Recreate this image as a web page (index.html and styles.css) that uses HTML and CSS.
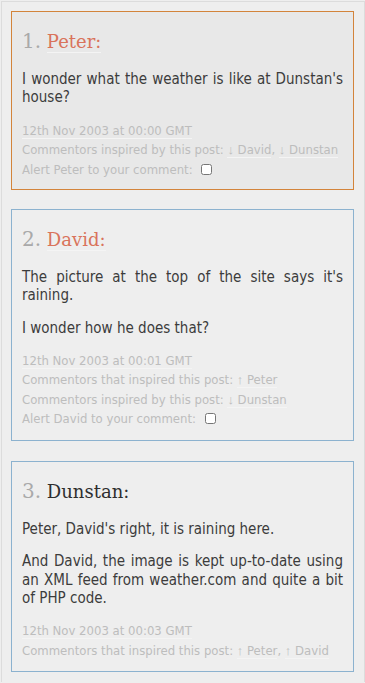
FILE: index.html
```html
<!DOCTYPE html>
<html>
<head>
<meta charset="utf-8">
<title>Comments</title>
<link rel="stylesheet" href="styles.css">
</head>
<body>
<div class="page">
  <ol class="comments">
    <li class="comment comment-author">
      <h3 class="comment-title"><span class="num">1.</span> <a class="name" href="#">Peter:</a></h3>
      <p>I wonder what the weather is like at Dunstan's house?</p>
      <div class="meta">
        <div class="meta-line"><a class="meta-link" href="#">12th Nov 2003 at 00:00 GMT</a></div>
        <div class="meta-line">Commentors inspired by this post: <a class="meta-link" href="#"><span class="arrow">&darr;</span> David</a>, <a class="meta-link" href="#"><span class="arrow">&darr;</span> Dunstan</a></div>
        <div class="meta-line">Alert Peter to your comment: <input class="alert" type="checkbox"></div>
      </div>
    </li>
    <li class="comment">
      <h3 class="comment-title"><span class="num">2.</span> <a class="name" href="#">David:</a></h3>
      <p>The picture at the top of the site says it's raining.</p>
      <p>I wonder how he does that?</p>
      <div class="meta">
        <div class="meta-line"><a class="meta-link" href="#">12th Nov 2003 at 00:01 GMT</a></div>
        <div class="meta-line">Commentors that inspired this post: <a class="meta-link" href="#"><span class="arrow">&uarr;</span> Peter</a></div>
        <div class="meta-line">Commentors inspired by this post: <a class="meta-link" href="#"><span class="arrow">&darr;</span> Dunstan</a></div>
        <div class="meta-line">Alert David to your comment: <input class="alert" type="checkbox"></div>
      </div>
    </li>
    <li class="comment">
      <h3 class="comment-title"><span class="num">3.</span> <span class="plain-name">Dunstan:</span></h3>
      <p>Peter, David's right, it is raining here.</p>
      <p>And David, the image is kept up-to-date using an XML feed from weather.com and quite a bit of PHP code.</p>
      <div class="meta">
        <div class="meta-line"><a class="meta-link" href="#">12th Nov 2003 at 00:03 GMT</a></div>
        <div class="meta-line">Commentors that inspired this post: <a class="meta-link" href="#"><span class="arrow">&uarr;</span> Peter</a>, <a class="meta-link" href="#"><span class="arrow">&uarr;</span> David</a></div>
      </div>
    </li>
  </ol>
</div>
</body>
</html>
```

FILE: styles.css
```css
html, body {
  margin: 0;
  padding: 0;
  background: #eeeeee;
}

body {
  font-family: "DejaVu Sans Condensed", "DejaVu Sans", sans-serif;
  font-size: 15px;
  color: #3c3c3c;
}

.page {
  box-sizing: border-box;
  width: 364px;
  margin: 1px 0 0 1px;
  padding: 9px 10px 10px 9px;
  border: 1px solid #dcdcdc;
  border-bottom: 0;
}

.comments {
  list-style: none;
  margin: 0;
  padding: 0;
}

.comment {
  border: 1px solid #8cb2cf;
  background: #eeeeee;
  padding: 18px 10px 11px 10px;
  margin: 0 0 20px 0;
}

.comment:last-child {
  margin-bottom: 0;
}

.comment-author {
  border-color: #d3843b;
  background: #e8e8e8;
  padding-bottom: 10px;
  margin-bottom: 19px;
}

.comment-title {
  margin: 0 0 17px 0;
  font-family: "DejaVu Serif", serif;
  font-weight: normal;
  font-size: 18px;
  line-height: 22px;
}

.num {
  color: #a9a9a9;
  font-size: 20px;
}

.name {
  color: #d9735b;
  text-decoration: none;
  border-bottom: 1px solid #f4f4f4;
}

.plain-name {
  color: #2e2e2e;
}

.comment p {
  margin: 0 0 14px 0;
  line-height: 18.3px;
  text-align: justify;
}

.meta {
  font-size: 13px;
  line-height: 19.5px;
  color: #bdbdbd;
}

.meta-link {
  color: #bdbdbd;
  text-decoration: none;
  border-bottom: 1px solid #f4f4f4;
}

.arrow {
  font-family: "Liberation Sans", sans-serif;
}

.alert {
  width: 11px;
  height: 11px;
  margin: 0 0 0 5px;
  vertical-align: -1px;
}
```
